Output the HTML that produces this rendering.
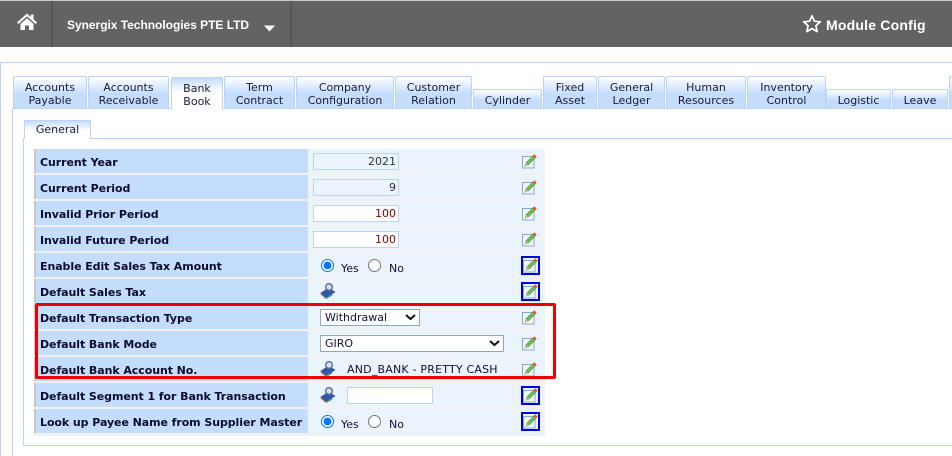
<!DOCTYPE html>
<html><head><meta charset="utf-8"><title>Module Config</title>
<style>
html,body{margin:0;padding:0;background:#fff}
body{width:952px;height:456px;position:relative;overflow:hidden;font-family:"DejaVu Sans","Liberation Sans",sans-serif;color:#10103a}
.a{position:absolute}
.bar{left:0;top:1px;width:952px;height:46px;background:#636363}
.top0{left:0;top:0;width:952px;height:1px;background:#c8c8c8}
.sep{top:1px;width:2px;height:46px;background:#555}
.co{left:67px;top:18px;font:bold 12px/14px "Liberation Sans",sans-serif;letter-spacing:-.03px;color:#fff;white-space:nowrap}
.mc{left:826px;top:17px;font:bold 14px/17px "Liberation Sans",sans-serif;letter-spacing:.2px;color:#fff;white-space:nowrap}
.line{background:#b9d4f6}
.tab{position:absolute;box-sizing:border-box;border:1px solid #b9d4f6;border-bottom:0;border-radius:2px 2px 0 0;background:linear-gradient(#fff 0,#c4ddfd 55%,#c4ddfd 100%);text-align:center;font-size:11px;line-height:13px;color:#1a1a3a;padding-top:4px;white-space:nowrap}
.tab.low{padding-top:4px}
.tab.on{background:linear-gradient(#c4ddfd 0,#fff 45%);z-index:2}
.sub{left:24px;top:120px;width:67px;height:19px;box-sizing:border-box;border:1px solid #b9d4f6;border-bottom:0;background:linear-gradient(#c4ddfd,#fff 55%);font-size:11px;line-height:17px;text-align:center;color:#1a1a3a;z-index:2}
.lab{position:absolute;left:34px;width:274px;height:24px;box-sizing:border-box;border-left:2px solid #c8c8cc;background:#c4ddfd;font:bold 11px/28px "DejaVu Sans",sans-serif;padding-left:4px;color:#0c0c30;white-space:nowrap;letter-spacing:-.07px;overflow:hidden}
.val{position:absolute;left:308px;width:237px;height:24px;background:#ebf3fd}
.strip{left:34px;width:511px;background:#f1f1f1}
.inp{position:absolute;left:313px;width:86px;height:17px;box-sizing:border-box;border:1px solid #b9d4f6;font:11px/15px "DejaVu Sans",sans-serif;text-align:right;padding:0 2px;background:#ebf3fd;color:#303040;margin:0;outline:0}
.inp.w{background:#fff;color:#800000}
.ed{position:absolute;left:522px;width:15px;height:15px}
.bx{position:absolute;left:521px;width:19px;height:19px;box-sizing:border-box;border:2px solid #0000e6}
.lk{position:absolute;left:320px;width:16px;height:16px}
.r{position:absolute;left:321px;width:13px;height:13px;margin:0}
.t{position:absolute;font-size:11px;line-height:13px;white-space:nowrap;color:#10103a}
select{position:absolute;appearance:none;-webkit-appearance:none;box-sizing:border-box;height:17px;border:1px solid #8ea6c4;border-radius:0;background:#fff;font:11px/15px "DejaVu Sans",sans-serif;letter-spacing:0;color:#10103a;padding:0 4px;margin:0;outline:0}
.red{left:35px;top:303px;width:521px;height:76px;box-sizing:border-box;border:3px solid #ee0000;border-radius:2px;z-index:5}
</style></head><body>
<div class="a top0"></div><div class="a bar"></div>
<div class="a sep" style="left:51px"></div><div class="a sep" style="left:290px"></div>
<svg class="a" style="left:16px;top:12px" width="22" height="19" viewBox="0 0 22 19"><path fill="#fff" d="M11 1.5 L15 5 V2.5 H17.5 V7.2 L21 10.5 L19.6 12 L11 4.4 L2.4 12 L1 10.5 Z M4.5 12 L11 6.2 L17.5 12 V18 H13 V13.5 H9 V18 H4.5 Z"/></svg>
<div class="a co">Synergix Technologies PTE LTD</div>
<svg class="a" style="left:263px;top:25px" width="13" height="7"><path fill="#fff" d="M1 0.5H12L6.5 6.5Z"/></svg>
<svg class="a" style="left:802px;top:14px" width="20" height="20" viewBox="0 0 20 20"><path fill="none" stroke="#fff" stroke-width="1.7" stroke-linejoin="round" d="M10 1.8 L12.4 7.2 L18.3 7.8 L13.9 11.7 L15.2 17.6 L10 14.6 L4.8 17.6 L6.1 11.7 L1.7 7.8 L7.6 7.2 Z"/></svg>
<div class="a mc">Module Config</div>

<div class="a line" style="left:0;top:62px;width:952px;height:1px"></div>
<div class="a line" style="left:0;top:62px;width:1px;height:394px"></div>
<div class="a line" style="left:12px;top:108px;width:940px;height:1px"></div>
<div class="a line" style="left:12px;top:108px;width:1px;height:348px"></div>
<div class="a line" style="left:23px;top:138px;width:929px;height:1px"></div>
<div class="a line" style="left:23px;top:138px;width:1px;height:308px"></div>
<div class="a line" style="left:23px;top:445px;width:929px;height:1px"></div>

<div class="tab" style="left:13px;top:76px;width:74px;height:32px">Accounts<br>Payable</div>
<div class="tab" style="left:88px;top:76px;width:81px;height:32px">Accounts<br>Receivable</div>
<div class="tab on" style="left:171px;top:77px;width:52px;height:32px">Bank<br>Book</div>
<div class="tab" style="left:224px;top:76px;width:71px;height:32px">Term<br>Contract</div>
<div class="tab" style="left:296px;top:76px;width:98px;height:32px">Company<br>Configuration</div>
<div class="tab" style="left:395px;top:76px;width:77px;height:32px">Customer<br>Relation</div>
<div class="tab low" style="left:473px;top:89px;width:69px;height:19px">Cylinder</div>
<div class="tab" style="left:543px;top:76px;width:54px;height:32px">Fixed<br>Asset</div>
<div class="tab" style="left:598px;top:76px;width:67px;height:32px">General<br>Ledger</div>
<div class="tab" style="left:666px;top:76px;width:80px;height:32px">Human<br>Resources</div>
<div class="tab" style="left:747px;top:76px;width:79px;height:32px">Inventory<br>Control</div>
<div class="tab low" style="left:826px;top:89px;width:65px;height:19px">Logistic</div>
<div class="tab low" style="left:892px;top:89px;width:56px;height:19px">Leave</div>
<div class="tab" style="left:949px;top:76px;width:20px;height:32px"></div>
<div class="a sub">General</div>

<svg width="0" height="0" style="position:absolute"><defs>
<symbol id="pen" viewBox="0 0 15 15"><rect x=".5" y="2.5" width="11.5" height="11.5" fill="#f2f6fb" stroke="#86a8cc"/><path d="M3 12 L4 8.8 L11 1.8 L13.2 4 L6.2 11 Z" fill="#74bc58" stroke="#4b9440" stroke-width=".6"/><path d="M2.6 12.6 L3.9 9 L6.2 11.2 Z" fill="#c9b98e"/><path d="M10.8 2 L12.2 .4 L14.8 2.6 L13.2 4.2 Z" fill="#e8502a"/></symbol>
<symbol id="look" viewBox="0 0 16 16"><path d="M0.5 10 L8.5 4.5 L15.5 9 L6 15 Z" fill="#2a5cb4"/><path d="M0.5 10 L6 15 L6 16 L0.5 11.4 Z" fill="#c95a3a"/><path d="M6 15 L12 11.3 L12.6 12.4 L6.5 16 Z" fill="#58a050"/><path d="M7 7.5 L4.5 10" stroke="#4a4f78" stroke-width="2.2"/><circle cx="9" cy="4" r="3.3" fill="#d6e0ee" stroke="#5c6c90" stroke-width="1.4"/></symbol>
</defs></svg>

<div class="a strip" style="top:149px;height:287px"></div>

<div class="lab" style="top:149px">Current Year</div><div class="val" style="top:149px"></div>
<div class="lab" style="top:175px">Current Period</div><div class="val" style="top:175px"></div>
<div class="lab" style="top:201px">Invalid Prior Period</div><div class="val" style="top:201px"></div>
<div class="lab" style="top:227px">Invalid Future Period</div><div class="val" style="top:227px"></div>
<div class="lab" style="top:253px">Enable Edit Sales Tax Amount</div><div class="val" style="top:253px"></div>
<div class="lab" style="top:279px">Default Sales Tax</div><div class="val" style="top:279px"></div>
<div class="lab" style="top:305px">Default Transaction Type</div><div class="val" style="top:305px"></div>
<div class="lab" style="top:331px">Default Bank Mode</div><div class="val" style="top:331px"></div>
<div class="lab" style="top:357px">Default Bank Account No.</div><div class="val" style="top:357px"></div>
<div class="lab" style="top:383px">Default Segment 1 for Bank Transaction</div><div class="val" style="top:383px"></div>
<div class="lab" style="top:409px">Look up Payee Name from Supplier Master</div><div class="val" style="top:409px"></div>

<input class="inp" style="top:153px" value="2021" readonly>
<input class="inp" style="top:179px" value="9" readonly>
<input class="inp w" style="top:205px" value="100">
<input class="inp w" style="top:231px" value="100">

<input class="r" type="radio" name="a" checked style="top:259px"><span class="t" style="left:341px;top:262px">Yes</span>
<input class="r" type="radio" name="a" style="top:259px;left:368px"><span class="t" style="left:389px;top:262px">No</span>

<svg class="lk" style="top:283px"><use href="#look"/></svg>

<select style="left:320px;top:309px;width:100px"><option>Withdrawal</option></select>
<svg class="a" style="left:405px;top:314px" width="11" height="7"><path d="M1 1 L5.5 5 L10 1" fill="none" stroke="#111" stroke-width="2"/></svg>
<select style="left:320px;top:335px;width:184px"><option>GIRO</option></select>
<svg class="a" style="left:489px;top:340px" width="11" height="7"><path d="M1 1 L5.5 5 L10 1" fill="none" stroke="#111" stroke-width="2"/></svg>

<svg class="lk" style="top:361px"><use href="#look"/></svg>
<span class="t" style="left:347px;top:363px;letter-spacing:.2px">AND_BANK - PRETTY CASH</span>

<svg class="lk" style="top:387px"><use href="#look"/></svg>
<input class="inp w" style="left:347px;top:387px">

<input class="r" type="radio" name="b" checked style="top:415px"><span class="t" style="left:341px;top:418px">Yes</span>
<input class="r" type="radio" name="b" style="top:415px;left:368px"><span class="t" style="left:389px;top:418px">No</span>

<svg class="ed" style="top:154px"><use href="#pen"/></svg>
<svg class="ed" style="top:180px"><use href="#pen"/></svg>
<svg class="ed" style="top:206px"><use href="#pen"/></svg>
<svg class="ed" style="top:232px"><use href="#pen"/></svg>
<svg class="ed" style="top:258px;left:523px"><use href="#pen"/></svg><div class="bx" style="top:256px"></div>
<svg class="ed" style="top:284px;left:523px"><use href="#pen"/></svg><div class="bx" style="top:282px"></div>
<svg class="ed" style="top:310px"><use href="#pen"/></svg>
<svg class="ed" style="top:336px"><use href="#pen"/></svg>
<svg class="ed" style="top:362px"><use href="#pen"/></svg>
<svg class="ed" style="top:388px;left:523px"><use href="#pen"/></svg><div class="bx" style="top:386px"></div>
<svg class="ed" style="top:414px;left:523px"><use href="#pen"/></svg><div class="bx" style="top:412px"></div>

<div class="a red"></div>
</body></html>
